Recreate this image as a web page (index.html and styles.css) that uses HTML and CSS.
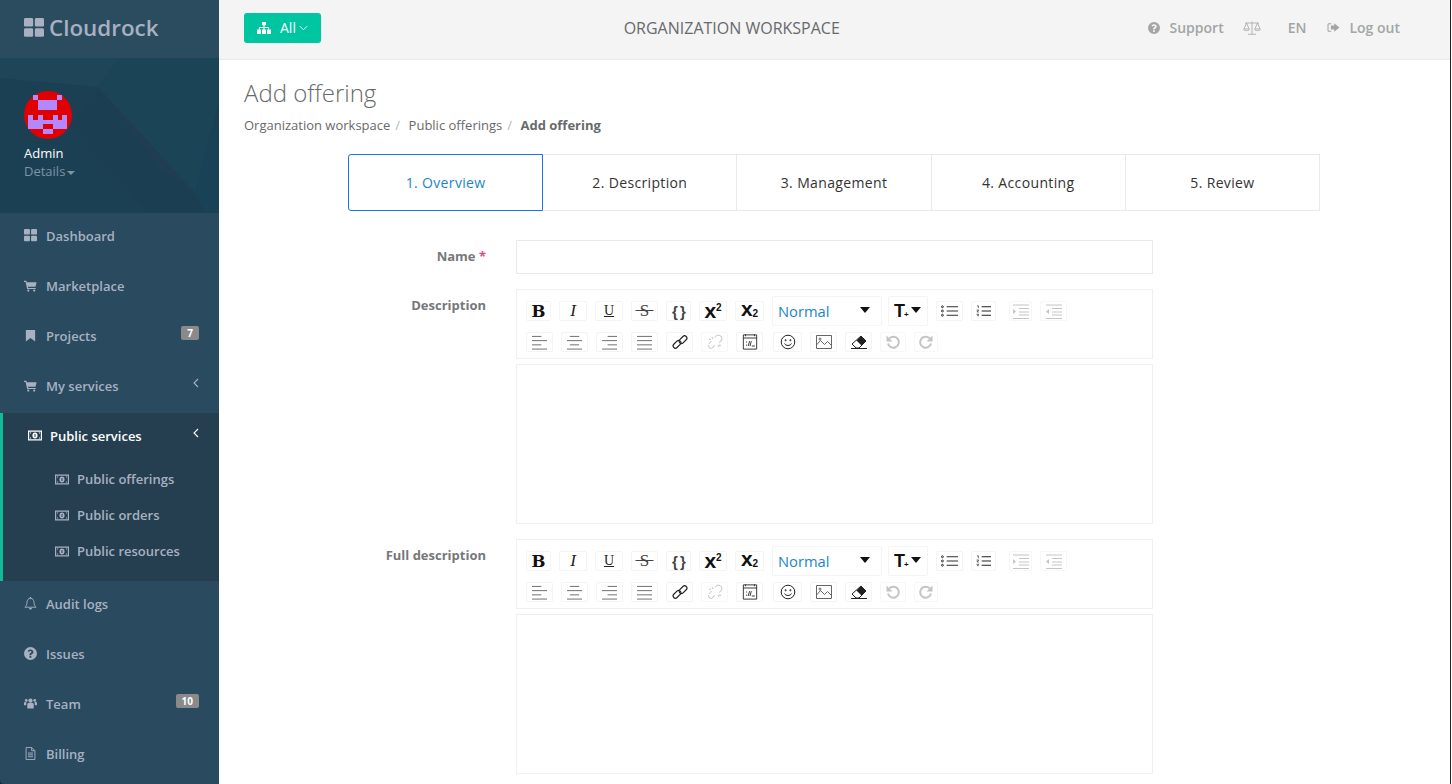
FILE: index.html
```html
<!DOCTYPE html>
<html>
<head>
<meta charset="utf-8"/>
<title>Add offering</title>
<link rel="stylesheet" href="styles.css">
</head>
<body>

<svg class="defs" width="0" height="0">
	<symbol id="i-grid" viewBox="0 0 14 14"><rect width="6.4" height="6" rx="1"/><rect x="7.6" width="6.4" height="6" rx="1"/><rect y="7.2" width="6.4" height="6" rx="1"/><rect x="7.6" y="7.2" width="6.4" height="6" rx="1"/></symbol>
	<symbol id="i-cart" viewBox="0 0 14 14"><path d="M0 2h2.600l.4 1.400h10.600l-1.200 5H4.300l.3 1.200h8v1.200H3.400L1.700 3.200H0z"/><circle cx="4.600" cy="12.400" r="1.200"/><circle cx="11" cy="12.400" r="1.200"/></symbol>
	<symbol id="i-bookmark" viewBox="0 0 14 14"><path d="M2 1h10v12.500L7 9.600l-5 3.900z"/></symbol>
	<symbol id="i-money" viewBox="0 0 14 10"><path fill-rule="evenodd" d="M0 0h14v10H0zM1.200 1.200v7.600h11.600V1.200z"/><path fill-rule="evenodd" d="M7 2c1.500 0 2.600 1.300 2.600 3S8.500 8 7 8 4.400 6.700 4.400 5 5.500 2 7 2zM6.500 3.400v3.200h1V3.400z"/><path d="M2 2h1.500L2 3.500zM12 2h-1.500L12 3.500zM2 8h1.500L2 6.500zM12 8h-1.500L12 6.500z"/></symbol>
	<symbol id="i-bell" viewBox="0.500 0 13 14"><path fill="none" stroke="currentColor" stroke-width="1" d="M7 1.500c-2.600 0-3.700 2-3.700 4 0 3-1.100 4.300-2.300 5.500h12c-1.200-1.200-2.300-2.500-2.300-5.500 0-2-1.100-4-3.700-4z"/><path d="M5.500 11.800h3c0 1-.7 1.700-1.500 1.700s-1.500-.7-1.500-1.700zM6.300 0h1.400v1.500H6.300z"/></symbol>
	<symbol id="i-question" viewBox="1 1 12 12"><path fill-rule="evenodd" d="M7 1a6 6 0 1 1 0 12A6 6 0 0 1 7 1zM6.100 9.300v1.600h1.700V9.300zM7.100 3.300c-1.300 0-2.200.6-2.700 1.500l1.100.8c.4-.5.800-.8 1.400-.8s1 .3 1 .8-.4.700-.9 1c-.6.400-1 .8-1 1.500v.4h1.700c0-.5.200-.6.800-1 .7-.4 1.200-1 1.200-1.900 0-1.500-1.300-2.300-2.600-2.300z"/></symbol>
	<symbol id="i-users" viewBox="0 1.500 14 12"><circle cx="7" cy="4.500" r="2.300"/><circle cx="2.400" cy="4.200" r="1.500"/><circle cx="11.600" cy="4.200" r="1.500"/><path d="M3.500 8.200c0-1 1-1.200 1.800-1.200h3.400c.8 0 1.800.2 1.800 1.200v4.100c0 .5-.4.700-.8.700H4.300c-.4 0-.8-.2-.8-.7z"/><path d="M0 6.900c0-.8.700-1 1.300-1h1.500c-.3.300-.4.800-.4 1.300v2.300H.5c-.3 0-.5-.2-.5-.5zM14 6.900c0-.8-.7-1-1.300-1h-1.500c.3.300.4.800.4 1.300v2.300h1.900c.3 0 .5-.2.500-.5z"/></symbol>
	<symbol id="i-file" viewBox="1.500 0 11.500 14"><path fill="none" stroke="currentColor" stroke-width="1" d="M2.500.500h6l3.500 3.500v9.500H2.500zM8.500.500V4H12M4.500 6.500h5.500M4.500 8.500h5.500M4.500 10.500h5.500"/></symbol>
	<symbol id="i-sitemap" viewBox="0 0 14 12"><path d="M5 0h4v3.200H7.500v1.900h4.300v2.400H14V12H10V7.500h1.100V6.100H7.500v1.400H9V12H5V7.500h1.500V6.100H2.900v1.400H4V12H0V7.500h1.900V5.100h4.600V3.200H5z"/></symbol>
	<symbol id="i-scale" viewBox="0 0 18 14"><path fill="none" stroke="currentColor" stroke-width=".8" d="M9 .500v12.500M5 13.300h8M2 2h14M3.500 2L1 7.800M3.500 2L6 7.800M14.500 2L12 7.800M14.500 2L17 7.800M.6 8c.4 2.200 5.400 2.200 5.800 0zM11.600 8c.4 2.200 5.400 2.200 5.800 0z"/></symbol>
	<symbol id="i-logout" viewBox="0.500 0.500 13.500 11"><path d="M5 1.500H2.500C1.700 1.500 1 2.200 1 3v6c0 .8.700 1.500 1.500 1.500H5V9.400H2.600a.5.500 0 0 1-.5-.5V3.100c0-.3.200-.5.500-.5H5z"/><path d="M8 1.500L13.500 6 8 10.500V8H4.500V4H8z"/></symbol>
	<symbol id="i-left" viewBox="0 0 6 10"><path fill="none" stroke="currentColor" stroke-width="1.100" d="M5 1L1 5l4 4"/></symbol>
	<symbol id="i-down" viewBox="0 0 10 6"><path fill="none" stroke="currentColor" stroke-width="1" d="M1 1l4 4 4-4"/></symbol>

	<symbol id="e-left" viewBox="0 0 16 16"><path d="M0 1.500h10M0 6h16M0 10.500h10M0 15h16"/></symbol>
	<symbol id="e-center" viewBox="0 0 16 16"><path d="M3 1.500h10M0 6h16M3 10.500h10M0 15h16"/></symbol>
	<symbol id="e-right" viewBox="0 0 16 16"><path d="M6 1.500h10M0 6h16M6 10.500h10M0 15h16"/></symbol>
	<symbol id="e-justify" viewBox="0 0 16 16"><path d="M0 1.500h16M0 6h16M0 10.500h16M0 15h16"/></symbol>
	<symbol id="e-link" viewBox="0 0 16 16"><rect x="0.500" y="8" width="9" height="4.600" rx="2.300" stroke-width="1.200" transform="rotate(-45 5 10.300)"/><rect x="6.500" y="3.400" width="9" height="4.600" rx="2.300" stroke-width="1.200" transform="rotate(-45 11 5.700)"/></symbol>
	<symbol id="e-unlink" viewBox="0 0 16 16"><path d="M2 10l2.500-3M7 12.500l-2.500 2-2-.5-1-2 .5-1M9.500 1.500l2-.5 3 1.500.5 2.500-1 2-2 1.500M8 3.500L9.500 1.500M6 13l2-1.500M5 3l1 2M11 11l1 2M2 5l2 .5M12 11l2 .5"/></symbol>
	<symbol id="e-code" viewBox="0 0 18 18"><path d="M1.500 1v16h15V1zM1.500 4.500h15M4 .500v2M14 .500v2M11 13.500h3.500"/><path d="M4.500 9h1.200M4.500 12.500h1.200M8.500 8l-1.500 5.500M10.500 8L9 13.500"/></symbol>
	<symbol id="e-smile" viewBox="0 0 16 16"><circle cx="8" cy="8" r="6.800"/><circle cx="5.600" cy="6.200" r=".6"/><circle cx="10.400" cy="6.200" r=".6"/><path d="M4.500 9.500c1 2.600 6 2.600 7 0"/></symbol>
	<symbol id="e-image" viewBox="0 0 18 16"><path d="M1.500 1.500h15v13h-15zM1.500 11l4-4.500 4 4 3-3 4 4"/><circle cx="5" cy="5" r="1"/></symbol>
	<symbol id="e-eraser" viewBox="0 0 18 16"><path d="M1 14.500h16"/><path d="M2 10l4 4h3l7-7-5-5z"/><path class="fill-dark" d="M11 2l5 5-4.500 4.500-5-5z"/></symbol>
	<symbol id="e-undo" viewBox="0 0 16 16"><path d="M4.500 4.300A5.500 5.500 0 1 1 3 9.500" stroke-width="2"/><path class="fill-off" d="M1.500 1.500v6H7.500z"/></symbol>
	<symbol id="e-redo" viewBox="0 0 16 16"><path d="M11.500 4.300A5.500 5.500 0 1 0 13 9.500" stroke-width="2"/><path class="fill-off" d="M14.500 1.500v6H8.500z"/></symbol>
	<symbol id="e-ul" viewBox="0 0 18 12"><circle cx="1.500" cy="1.500" r="1"/><circle cx="1.500" cy="6" r="1"/><circle cx="1.500" cy="10.500" r="1"/><path d="M6 1.500h12M6 6h12M6 10.500h12"/></symbol>
	<symbol id="e-ol" viewBox="0 0 16 12"><path d="M1 .500h1.500v2.500M.5 5h2.500L1 7h2M.5 9.500h2.500L1.500 11H3" stroke-width=".7"/><path d="M6 1.500h10M6 6h10M6 10.500h10" stroke-width="1.200"/></symbol>
	<symbol id="e-indent" viewBox="0 0 18 15"><path d="M1 1h16M7 4.500h10M7 8h10M7 11h10M1 14.500h16"/><path class="fill-off" d="M1 5l3 2.500L1 10z"/></symbol>
	<symbol id="e-outdent" viewBox="0 0 18 15"><path d="M1 1h16M7 4.500h10M7 8h10M7 11h10M1 14.500h16"/><path class="fill-off" d="M4 5L1 7.500 4 10z"/></symbol>
</svg>

<div class="app">

<div class="sidebar">
	<div class="brand"><svg class="brand-icon"><use href="#i-grid"/></svg>Cloudrock</div>
	<div class="profile">
		<svg class="profile-bg" viewBox="0 0 219 155" preserveAspectRatio="none">
			<polygon points="0,0 219,0 219,155 0,155" fill="#1b4054"/>
			<polygon points="0,0 120,0 98,29 0,20" fill="#1f4558"/>
			<polygon points="98,29 195,135 205,155 150,155 70,70" fill="#1c3e53"/>
			<polygon points="98,29 195,135 160,110" fill="#203d52"/>
			<polygon points="98,29 120,0 219,0 219,40 208,85 195,135" fill="#1c4457"/>
			<polygon points="195,135 208,85 219,70 219,155 205,155" fill="#1a4256"/>
		</svg>
		<svg class="avatar" viewBox="0 0 48 48">
			<circle cx="24" cy="24" r="24" fill="#e00000"/>
			<path fill="#b388ff" d="M9 4h5v5H9zM33 4h5v5h-5zM14 9h19v10H14zM4 24h5v5H4zM14 24h5v5h-5zM29 24h5v5h-5zM38 24h5v5h-5zM4 29h39v9H29v-5H19v5H4zM19 38h10v5H19z"/>
		</svg>
		<div class="profile-name">Admin</div>
		<div class="profile-details">Details<span class="caret"></span></div>
	</div>
	<div class="nav">
		<div class="nav-item"><svg class="nav-icon"><use href="#i-grid"/></svg>Dashboard</div>
		<div class="nav-item"><svg class="nav-icon"><use href="#i-cart"/></svg>Marketplace</div>
		<div class="nav-item"><svg class="nav-icon"><use href="#i-bookmark"/></svg>Projects<span class="badge">7</span></div>
		<div class="nav-item"><svg class="nav-icon"><use href="#i-cart"/></svg>My services<svg class="nav-arrow"><use href="#i-left"/></svg></div>
		<div class="nav-group">
			<div class="nav-item active"><svg class="nav-icon"><use href="#i-money"/></svg>Public services<svg class="nav-arrow"><use href="#i-left"/></svg></div>
			<div class="nav-sub"><svg class="nav-icon"><use href="#i-money"/></svg>Public offerings</div>
			<div class="nav-sub"><svg class="nav-icon"><use href="#i-money"/></svg>Public orders</div>
			<div class="nav-sub"><svg class="nav-icon"><use href="#i-money"/></svg>Public resources</div>
		</div>
		<div class="nav-item"><svg class="nav-icon"><use href="#i-bell"/></svg>Audit logs</div>
		<div class="nav-item"><svg class="nav-icon"><use href="#i-question"/></svg>Issues</div>
		<div class="nav-item"><svg class="nav-icon"><use href="#i-users"/></svg>Team<span class="badge">10</span></div>
		<div class="nav-item"><svg class="nav-icon"><use href="#i-file"/></svg>Billing</div>
	</div>
</div>

<div class="main">
	<div class="topbar">
		<span class="btn-all"><svg class="btn-icon"><use href="#i-sitemap"/></svg>All<svg class="btn-down"><use href="#i-down"/></svg></span>
		<div class="top-title">ORGANIZATION WORKSPACE</div>
		<div class="top-right">
			<span class="top-link"><svg class="top-icon"><use href="#i-question"/></svg>Support</span>
			<svg class="top-scale"><use href="#i-scale"/></svg>
			<span class="top-lang">EN</span>
			<span class="top-link"><svg class="top-icon logout"><use href="#i-logout"/></svg>Log out</span>
		</div>
	</div>

	<div class="heading">
		<h2>Add offering</h2>
		<div class="crumbs">
			<span>Organization workspace</span><i>/</i><span>Public offerings</span><i>/</i><b>Add offering</b>
		</div>
	</div>

	<div class="wizard">
		<div class="steps">
			<div class="step active">1. Overview</div>
			<div class="step">2. Description</div>
			<div class="step">3. Management</div>
			<div class="step">4. Accounting</div>
			<div class="step">5. Review</div>
		</div>

		<div class="form">
			<div class="form-row name-row">
				<label>Name <em>*</em></label>
				<div class="field"><div class="input"></div></div>
			</div>

			<div class="form-row editor-row">
				<label>Description</label>
				<div class="field">
					<div class="toolbar">
						<div class="tb-row">
							<span class="tb w25 t-bold">B</span><span class="tb w28 t-italic">I</span><span class="tb w28 t-under">U</span><span class="tb w27 t-strike">&nbsp;S&nbsp;</span><span class="tb w25 t-braces">{ }</span><span class="tb w28 t-script t-up">x<sup>2</sup></span><span class="tb w29 t-script t-down">x<sub>2</sub></span>
							<span class="tb-select">Normal<span class="tri"></span></span>
							<span class="tb-size"><span class="t-big">T</span><span class="t-plus">+</span><span class="tri"></span></span>
							<span class="tb w27 svg-btn"><svg class="ic-ul"><use href="#e-ul"/></svg></span><span class="tb w25 svg-btn"><svg class="ic-ol"><use href="#e-ol"/></svg></span>
							<span class="tb w23 svg-btn off first-off"><svg class="ic-ind"><use href="#e-indent"/></svg></span><span class="tb w27 svg-btn off"><svg class="ic-ind"><use href="#e-outdent"/></svg></span>
						</div>
						<div class="tb-row">
							<span class="tb w27 svg-btn"><svg class="ic-al"><use href="#e-left"/></svg></span><span class="tb w27 svg-btn"><svg class="ic-al"><use href="#e-center"/></svg></span><span class="tb w27 svg-btn"><svg class="ic-al"><use href="#e-right"/></svg></span><span class="tb w27 svg-btn"><svg class="ic-al"><use href="#e-justify"/></svg></span><span class="tb w27 svg-btn"><svg class="ic-16 dark"><use href="#e-link"/></svg></span><span class="tb w27 svg-btn off"><svg class="ic-16"><use href="#e-unlink"/></svg></span><span class="tb w27 svg-btn"><svg class="ic-18 dark"><use href="#e-code"/></svg></span>
							<span class="tb w29 svg-btn wide-gap"><svg class="ic-16 dark"><use href="#e-smile"/></svg></span><span class="tb w27 svg-btn"><svg class="ic-18"><use href="#e-image"/></svg></span><span class="tb w27 svg-btn"><svg class="ic-18 dark"><use href="#e-eraser"/></svg></span><span class="tb w26 svg-btn off"><svg class="ic-16"><use href="#e-undo"/></svg></span><span class="tb w24 svg-btn off"><svg class="ic-16"><use href="#e-redo"/></svg></span>
						</div>
					</div>
					<div class="editor"></div>
				</div>
			</div>

			<div class="form-row editor-row">
				<label>Full description</label>
				<div class="field">
					<div class="toolbar">
						<div class="tb-row">
							<span class="tb w25 t-bold">B</span><span class="tb w28 t-italic">I</span><span class="tb w28 t-under">U</span><span class="tb w27 t-strike">&nbsp;S&nbsp;</span><span class="tb w25 t-braces">{ }</span><span class="tb w28 t-script t-up">x<sup>2</sup></span><span class="tb w29 t-script t-down">x<sub>2</sub></span>
							<span class="tb-select">Normal<span class="tri"></span></span>
							<span class="tb-size"><span class="t-big">T</span><span class="t-plus">+</span><span class="tri"></span></span>
							<span class="tb w27 svg-btn"><svg class="ic-ul"><use href="#e-ul"/></svg></span><span class="tb w25 svg-btn"><svg class="ic-ol"><use href="#e-ol"/></svg></span>
							<span class="tb w23 svg-btn off first-off"><svg class="ic-ind"><use href="#e-indent"/></svg></span><span class="tb w27 svg-btn off"><svg class="ic-ind"><use href="#e-outdent"/></svg></span>
						</div>
						<div class="tb-row">
							<span class="tb w27 svg-btn"><svg class="ic-al"><use href="#e-left"/></svg></span><span class="tb w27 svg-btn"><svg class="ic-al"><use href="#e-center"/></svg></span><span class="tb w27 svg-btn"><svg class="ic-al"><use href="#e-right"/></svg></span><span class="tb w27 svg-btn"><svg class="ic-al"><use href="#e-justify"/></svg></span><span class="tb w27 svg-btn"><svg class="ic-16 dark"><use href="#e-link"/></svg></span><span class="tb w27 svg-btn off"><svg class="ic-16"><use href="#e-unlink"/></svg></span><span class="tb w27 svg-btn"><svg class="ic-18 dark"><use href="#e-code"/></svg></span>
							<span class="tb w29 svg-btn wide-gap"><svg class="ic-16 dark"><use href="#e-smile"/></svg></span><span class="tb w27 svg-btn"><svg class="ic-18"><use href="#e-image"/></svg></span><span class="tb w27 svg-btn"><svg class="ic-18 dark"><use href="#e-eraser"/></svg></span><span class="tb w26 svg-btn off"><svg class="ic-16"><use href="#e-undo"/></svg></span><span class="tb w24 svg-btn off"><svg class="ic-16"><use href="#e-redo"/></svg></span>
						</div>
					</div>
					<div class="editor"></div>
				</div>
			</div>
		</div>
	</div>
</div>

</div>

</body>
</html>
```

FILE: styles.css
```css
html, body {
	margin: 0;
	height: 100%;
	overflow: hidden;
}
body {
	font-family: "Open Sans", "Liberation Sans", sans-serif;
	font-size: 13px;
	color: #676a6c;
	background: white;
}
.defs {
	display: none;
}
.app {
	display: flex;
	width: 1451px;
	height: 784px;
	overflow: hidden;
	background: #222;
	border-right: 1px solid #222;
	box-sizing: border-box;
}

/* sidebar */
.sidebar {
	width: 219px;
	flex: none;
	background: #294a5f;
	color: #a7b1c2;
	border-bottom-left-radius: 4px;
}
.brand {
	display: flex;
	align-items: center;
	height: 58px;
	padding: 0 0 3px 24px;
	box-sizing: border-box;
	font-size: 22.4px;
	font-weight: 600;
	background: #2b4b5f;
}
.brand-icon {
	width: 20px;
	height: 20px;
	margin-right: 5px;
	fill: currentColor;
}
.profile {
	position: relative;
	height: 155px;
	padding: 33px 0 0 24px;
	box-sizing: border-box;
	overflow: hidden;
}
.profile-bg {
	position: absolute;
	left: 0;
	top: 0;
	width: 100%;
	height: 100%;
}
.avatar {
	position: relative;
	display: block;
	width: 48px;
	height: 48px;
}
.profile-name {
	position: relative;
	margin-top: 5px;
	color: white;
	font-size: 13px;
	line-height: 18px;
}
.profile-details {
	position: relative;
	color: #7b94a6;
	font-size: 13px;
	line-height: 18px;
}
.caret {
	display: inline-block;
	margin-left: 2px;
	vertical-align: middle;
	border-top: 4px solid #7b94a6;
	border-left: 4px solid transparent;
	border-right: 4px solid transparent;
}
.nav-item {
	display: flex;
	align-items: center;
	height: 50px;
	padding: 0 20px 5px 24px;
	box-sizing: border-box;
	font-weight: 600;
}
.nav-icon {
	width: 13px;
	height: 13px;
	margin-right: 9px;
	fill: currentColor;
	flex: none;
}
.nav-arrow {
	width: 6px;
	height: 10px;
	margin: -6px 0 0 auto;
	color: #a7b1c2;
}
.badge {
	margin: -6px 0 0 auto;
	padding: 0 6px;
	height: 14px;
	line-height: 14px;
	border-radius: 2px;
	background: #8a8a8a;
	color: white;
	font-size: 10px;
	font-weight: 700;
}
.nav-group {
	height: 168px;
	border-left: 3px solid #10bc98;
	background: #253f50;
}
.nav-item.active {
	height: 48px;
	padding-left: 25px;
	padding-bottom: 3px;
	color: white;
}
.nav-item.active .nav-icon {
	width: 14px;
	margin-right: 8px;
}
.nav-item.active .nav-arrow {
	color: white;
}
.nav-sub {
	display: flex;
	align-items: center;
	height: 36px;
	padding: 0 0 0 52px;
	font-weight: 600;
}
.nav-sub .nav-icon {
	width: 14px;
	margin-right: 8px;
}

/* top bar */
.main {
	flex: 1;
	min-width: 0;
	background: white;
}
.topbar {
	display: flex;
	justify-content: space-between;
	align-items: center;
	height: 60px;
	padding: 0 50px 4px 25px;
	box-sizing: border-box;
	background: #f4f4f4;
	border-bottom: 1px solid #e7eaec;
}
.btn-all {
	display: inline-flex;
	align-items: center;
	height: 30px;
	padding: 0 13px;
	box-sizing: border-box;
	background: #00c5a1;
	border-radius: 3px;
	color: white;
	font-size: 14px;
}
.btn-icon {
	width: 14px;
	height: 12px;
	margin-right: 9px;
	fill: white;
}
.btn-down {
	width: 9px;
	height: 6px;
	margin-left: 3px;
	color: white;
}
.top-title {
	margin-right: 5px;
	font-size: 16px;
	color: #676a6c;
}
.top-right {
	display: flex;
	align-items: center;
	color: #a3a5a6;
	font-size: 14px;
	font-weight: 600;
}
.top-link {
	display: flex;
	align-items: center;
}
.top-icon {
	width: 12px;
	height: 12px;
	margin-right: 10px;
	fill: currentColor;
}
.top-icon.logout {
	width: 13px;
	height: 11px;
	margin-right: 9px;
}
.top-scale {
	width: 18px;
	height: 14px;
	margin: 0 27px 0 19px;
	fill: none;
	color: #a3a5a6;
}
.top-lang {
	margin-right: 21px;
}

/* heading */
.heading {
	padding: 0 25px;
}
h2 {
	margin: 18px 0 0 0;
	font-size: 24px;
	line-height: 30px;
	font-weight: 300;
	color: #676a6c;
}
.crumbs {
	margin-top: 8px;
	line-height: 18px;
}
.crumbs i {
	font-style: normal;
	color: #b5b7b8;
	margin: 0 8.500px 0 5px;
}
.crumbs b {
	font-weight: 700;
}

/* wizard */
.wizard {
	width: 972px;
	margin: 20px 0 0 129px;
}
.steps {
	display: flex;
	height: 57px;
}
.step {
	flex: 1;
	display: flex;
	justify-content: center;
	align-items: center;
	padding-bottom: 1px;
	box-sizing: border-box;
	border: 1px solid #e7eaec;
	border-left: 0;
	font-size: 14px;
	letter-spacing: .35px;
	color: #333;
}
.step.active {
	border: 1px solid #1a73e8;
	border-radius: 3px 0 0 3px;
	color: #1c84c6;
}

/* form */
.form-row {
	display: flex;
}
.form-row label {
	width: 138px;
	padding-top: 7px;
	text-align: right;
	font-weight: 700;
	color: #767879;
	flex: none;
}
.form-row em {
	font-style: normal;
	color: #f0457a;
}
.field {
	width: 637px;
	margin-left: 30px;
}
.name-row {
	margin-top: 29px;
}
.input {
	height: 34px;
	box-sizing: border-box;
	border: 1px solid #e9e9e9;
}
.editor-row {
	margin-top: 15px;
}
.toolbar {
	height: 70px;
	padding: 6px 0 0 9px;
	box-sizing: border-box;
	border: 1px solid #f0f0f0;
}
.tb-row {
	display: flex;
	align-items: center;
	height: 30px;
}
.tb-row + .tb-row {
	margin-top: 1px;
}
.tb {
	display: flex;
	justify-content: center;
	align-items: center;
	height: 20px;
	margin-right: 8px;
	box-sizing: border-box;
	border: 1px solid #f4f4f4;
	border-radius: 2px;
	color: #222;
	white-space: nowrap;
	flex: none;
}
.w23 { width: 23px; }
.w24 { width: 24px; }
.w25 { width: 25px; }
.w26 { width: 26px; }
.w27 { width: 27px; }
.w28 { width: 28px; }
.w29 { width: 29px; }
.t-bold {
	font: 700 16.500px "DejaVu Serif", "Liberation Serif", serif;
	color: #111;
}
.t-italic {
	font: italic 400 17px "Liberation Serif", serif;
}
.t-under {
	font: 400 14px "Liberation Serif", serif;
	text-decoration: underline;
}
.t-strike {
	font: 400 17px "Liberation Serif", serif;
	text-decoration: line-through;
	color: #444;
}
.t-braces {
	font: 700 15px "Liberation Sans", sans-serif;
	letter-spacing: -1px;
	color: #444;
}
.t-script {
	display: block;
	text-align: center;
	font: 700 21px "Liberation Sans", sans-serif;
	color: #111;
}
.t-up {
	line-height: 18px;
}
.t-down {
	line-height: 14px;
}
.t-script sup, .t-script sub {
	font-size: 10px;
	line-height: 0;
}
.t-script sup {
	vertical-align: 7px;
}
.t-script sub {
	vertical-align: -1px;
}
.tb-select {
	display: flex;
	align-items: center;
	justify-content: space-between;
	width: 110px;
	height: 30px;
	margin-right: 6px;
	padding: 0 11px 0 5px;
	box-sizing: border-box;
	border: 1px solid #f4f4f4;
	border-radius: 2px;
	color: #1c84c6;
	font-size: 14.700px;
	flex: none;
}
.tri {
	display: block;
	border-top: 6px solid #111;
	border-left: 5px solid transparent;
	border-right: 5px solid transparent;
	margin-top: -3px;
}
.tb-size {
	display: flex;
	align-items: center;
	width: 40px;
	height: 30px;
	margin-right: 8px;
	padding-left: 5px;
	box-sizing: border-box;
	border: 1px solid #f4f4f4;
	border-radius: 2px;
	color: #111;
	flex: none;
}
.t-big {
	font: 700 18px "Liberation Sans", sans-serif;
}
.t-plus {
	font: 700 8px "Liberation Sans", sans-serif;
	margin: 7px 2px 0 -1px;
}
.first-off {
	margin-left: 5px;
}
.wide-gap {
	margin-left: 2px;
}
.svg-btn svg {
	fill: none;
	stroke: #666;
	stroke-width: 1;
}
.svg-btn svg.dark {
	stroke: #222;
}
.svg-btn svg.ic-ul, .svg-btn svg.ic-ol {
	stroke: #222;
}
.ic-ul {
	width: 17px;
	height: 12px;
}
.ic-ol {
	width: 15px;
	height: 12px;
}
.ic-ind {
	width: 18px;
	height: 15px;
}
.ic-al {
	width: 15px;
	height: 15px;
}
.ic-16 {
	width: 16px;
	height: 16px;
}
.ic-18 {
	width: 18px;
	height: 16px;
}
.fill-off {
	fill: #c4c4c4;
	stroke: none;
}
.fill-dark {
	fill: #222;
	stroke: none;
}
.off {
	border-color: #f7f7f7;
}
.svg-btn.off svg {
	stroke: #c4c4c4;
}
.editor {
	height: 160px;
	margin-top: 5px;
	box-sizing: border-box;
	border: 1px solid #f0f0f0;
}
```
